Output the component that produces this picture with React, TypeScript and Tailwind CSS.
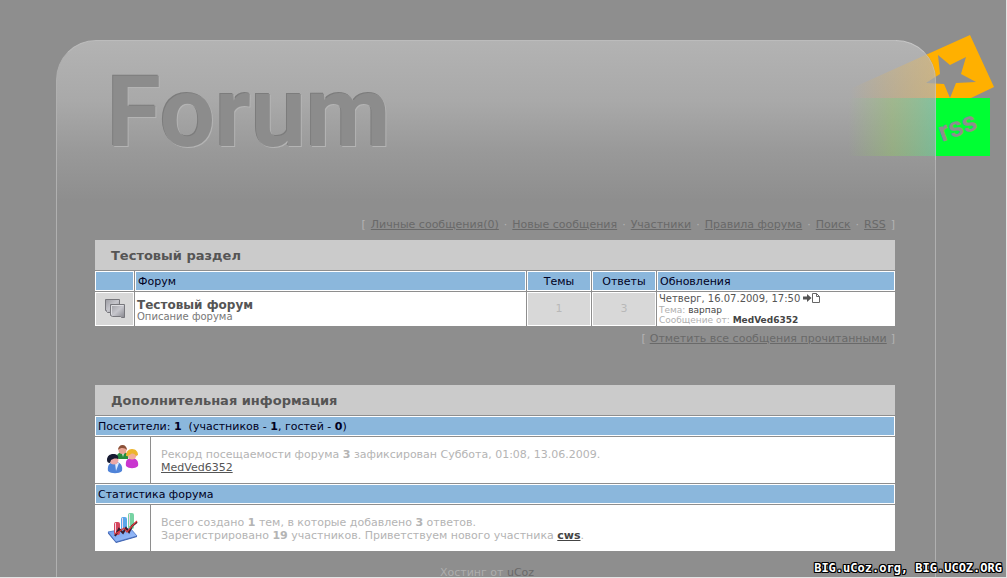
import React from 'react';

interface NavLink {
  label: string;
  href: string;
}

const navLinks: NavLink[] = [
  { label: 'Личные сообщения(0)', href: '#messages' },
  { label: 'Новые сообщения', href: '#new' },
  { label: 'Участники', href: '#members' },
  { label: 'Правила форума', href: '#rules' },
  { label: 'Поиск', href: '#search' },
  { label: 'RSS', href: '#rss' },
];

const headCell =
  'h-[21px] border-t border-[#8e8e8e] bg-[#8bb7dc] px-[3px] pt-0.5 text-[11px] leading-3 font-normal text-[#000022] shadow-[inset_0_0_0_1px_#ffffff]';
const countCell =
  'border-t border-l border-[#8e8e8e] bg-[#d8d8d8] text-center text-[11px] text-[#b8b8b8] shadow-[inset_0_0_0_1px_#ffffff]';

function TopicIcon() {
  return (
    <svg width="20" height="20" viewBox="0 0 20 20" className="mx-auto block" aria-hidden="true">
      <defs>
        <linearGradient id="sheet" x1="0" y1="0" x2="1" y2="1">
          <stop offset="0" stopColor="#9c9ca2" />
          <stop offset="0.5" stopColor="#c6c6cc" />
          <stop offset="1" stopColor="#85858c" />
        </linearGradient>
      </defs>
      <path d="M0.5 0.5h14v13h-12l-1-1v-1h-1z" fill="url(#sheet)" stroke="#77777c" />
      <path d="M5.500 5.500h14v13h-3l-1-1h-8l-2-1z" fill="url(#sheet)" stroke="#77777c" />
      <path d="M6.500 15.500v-9h12" fill="none" stroke="#dedee2" />
    </svg>
  );
}

function LastPostIcon() {
  return (
    <svg width="17" height="10" viewBox="0 0 17 10" className="inline-block align-[-1px]" aria-hidden="true">
      <path d="M0 3.500h4V1l4.500 4L4 9V6.500H0z" fill="#555555" />
      <path d="M9.500 0.500h4l3 3v6h-7zM13.500 0.500v3h3" fill="#ffffff" stroke="#666666" />
    </svg>
  );
}

function PeopleIcon() {
  return (
    <svg width="32" height="30" viewBox="0 0 32 30" className="mx-auto block" aria-hidden="true">
      <path d="M10 14c-1-5 2-7 6-7s6 2 5 7z" fill="#268c3d" />
      <path d="M15 8l1 4 1-4z" fill="#ffffff" />
      <circle cx="15.500" cy="5" r="4" fill="#e9a594" />
      <path d="M11 5c0-3 2-5 4.500-5S20 2 20 5c-2-2-6-3-9 0z" fill="#8b5138" />
      <path d="M19 21c-1-6 2-8 6-8s7 3 6 8c-3 3-9 3-12 0z" fill="#c936cf" />
      <circle cx="25" cy="10" r="4.500" fill="#f3ad98" />
      <path d="M19 11c0-4 2-7 6-7s6 3 6 6l-2 1c-1-2-3-3-5-2l-3 2z" fill="#edb52d" />
      <path d="M1 26c-1-6 2-9 7-9s8 3 7 9c-3 3-11 3-14 0z" fill="#4f83d8" />
      <path d="M8 18l1 8 3-8z" fill="#dce9ff" />
      <circle cx="7" cy="15" r="4.500" fill="#eda8a6" />
      <path d="M0 15c0-4 3-6 6-6 4 0 6 2 5 5-3-1-5 0-7 1l-1 3c-2 0-3-1-3-3z" fill="#171b32" />
    </svg>
  );
}

function ChartIcon() {
  return (
    <svg width="32" height="32" viewBox="0 0 32 32" className="mx-auto block" aria-hidden="true">
      <defs>
        <linearGradient id="floor" x1="0" y1="0" x2="1" y2="1">
          <stop offset="0" stopColor="#6c9bef" />
          <stop offset="1" stopColor="#a3c3fa" />
        </linearGradient>
      </defs>
      <path d="M1 20l22-4 7 8-21 6z" fill="url(#floor)" stroke="#5c84d0" />
      <path d="M1 20v1.500l8 9.500 21-6v-1l-21 6z" fill="#3e62b1" />
      <rect x="7" y="10" width="6" height="13" rx="2" fill="#d6475e" />
      <rect x="14" y="5" width="6" height="14" rx="2" fill="#59a6ea" />
      <rect x="21" y="1" width="6" height="16" rx="2" fill="#77d3a3" />
      <path d="M8.500 11v10M15.500 6v11M22.500 2v12" stroke="#f0d8e8" strokeWidth="1" />
      <path d="M8 24l4-7 4 4 3-5 3 4 3-6 5-4" fill="none" stroke="#3a1c2c" strokeWidth="2" />
      <path d="M8 22l5-3 4-3 3 4 5-6 5-5" fill="none" stroke="#dd3939" strokeWidth="1.200" />
    </svg>
  );
}

// Bookmark and rss tabs that stick out from behind the glass panel
function SideTabs() {
  return (
    <svg width="160" height="130" viewBox="840 30 160 130" className="absolute top-[30px] right-[6px]">
      <defs>
        <clipPath id="inside">
          <path d="M840 40H896A40 40 0 0 1 936 80V160H840Z" />
        </clipPath>
        <clipPath id="outside">
          <path d="M840 30H1000V160H936V80A40 40 0 0 0 896 40H840Z" />
        </clipPath>
        <linearGradient id="fadeOrange" gradientUnits="userSpaceOnUse" x1="850" y1="0" x2="936" y2="0">
          <stop offset="0" stopColor="#e5b145" stopOpacity="0" />
          <stop offset="1" stopColor="#e0b868" stopOpacity="0.55" />
        </linearGradient>
        <linearGradient id="fadeGreen" gradientUnits="userSpaceOnUse" x1="848" y1="0" x2="936" y2="0">
          <stop offset="0" stopColor="#8fd05c" stopOpacity="0" />
          <stop offset="0.5" stopColor="#8fd05c" stopOpacity="0.35" />
          <stop offset="1" stopColor="#5fd894" stopOpacity="0.5" />
        </linearGradient>
      </defs>
      <a href="#bookmark" aria-label="Bookmark">
        <g clipPath="url(#outside)">
          <path d="M970 35L994 87 971 98H850V89Z" fill="#ffb000" />
          <path d="M938 55L950 65 966 57 961 74 976 82 956 83 950 98 944 84 926 83 940 74Z" fill="#8e8e8e" />
        </g>
        <g clipPath="url(#inside)">
          <path d="M970 35L994 87 971 98H850V89Z" fill="url(#fadeOrange)" />
          <path d="M938 55L950 65 944 84 926 83 940 74Z" fill="#a6a6a2" />
        </g>
      </a>
      <a href="#rss">
        <g clipPath="url(#outside)">
          <path d="M848 98H990V156H848Z" fill="#00ff33" />
        </g>
        <g clipPath="url(#inside)">
          <path d="M848 98H990V156H848Z" fill="url(#fadeGreen)" />
        </g>
        <text
          x="942"
          y="142"
          transform="rotate(-20 942 142)"
          className="fill-[#8e8e8e] font-['Roboto',sans-serif] text-[28px] font-bold"
        >
          rss
        </text>
      </a>
      <path d="M896 40.500A39.500 39.500 0 0 1 935.500 80V160" fill="none" stroke="#ffffff" strokeOpacity="0.15" />
    </svg>
  );
}

function SectionTitle({ children, span }: { children: React.ReactNode; span: number }) {
  return (
    <tr>
      <th
        colSpan={span}
        className="h-[30px] bg-[#cbcbcb] px-4 pt-0.5 text-left text-[13px] leading-4 font-bold text-[#555555]"
      >
        {children}
      </th>
    </tr>
  );
}

function ForumTable() {
  return (
    <table className="w-full table-fixed border-separate border-spacing-0 bg-white">
      <colgroup>
        <col className="w-[39px]" />
        <col />
        <col className="w-[65px]" />
        <col className="w-[65px]" />
        <col className="w-[239px]" />
      </colgroup>
      <tbody>
        <SectionTitle span={5}>Тестовый раздел</SectionTitle>
        <tr>
          <td className={headCell}></td>
          <th className={`${headCell} border-l text-left`}>Форум</th>
          <th className={`${headCell} border-l text-center`}>Темы</th>
          <th className={`${headCell} border-l text-center`}>Ответы</th>
          <th className={`${headCell} border-l text-left`}>Обновления</th>
        </tr>
        <tr>
          <td className="h-[35px] border-t border-[#8e8e8e] bg-[#d8d8d8] shadow-[inset_0_0_0_1px_#ffffff]">
            <TopicIcon />
          </td>
          <td className="border-t border-l border-[#8e8e8e] px-0.5 pt-0.5 align-middle">
            <a href="#forum" className="block text-[12px] leading-[14px] font-bold text-[#555555]">
              Тестовый форум
            </a>
            <div className="text-[10px] leading-[10px] text-[#777777]">Описание форума</div>
          </td>
          <td className={countCell}>1</td>
          <td className={countCell}>3</td>
          <td className="border-t border-l border-[#8e8e8e] px-0.5 text-[9px] leading-[10px] whitespace-nowrap text-[#b0b0b0]">
            <a href="#last" className="block text-[10px] leading-3 text-[#555555]">
              Четверг, 16.07.2009, 17:50 <LastPostIcon />
            </a>
            <div>
              Тема: <a href="#topic" className="text-[#444444]">варпар</a>
            </div>
            <div>
              Сообщение от: <a href="#user" className="font-bold text-[#444444]">MedVed6352</a>
            </div>
          </td>
        </tr>
      </tbody>
    </table>
  );
}

function InfoTable() {
  const iconCell = 'h-[47px] border-t border-[#8e8e8e]';
  const textCell = 'border-t border-l border-[#8e8e8e] px-2.5 pt-0.5 text-[11px] leading-[13px] text-[#b4b4b4]';

  return (
    <table className="w-full table-fixed border-separate border-spacing-0 bg-white">
      <colgroup>
        <col className="w-[55px]" />
        <col />
      </colgroup>
      <tbody>
        <SectionTitle span={2}>Дополнительная информация</SectionTitle>
        <tr>
          <th colSpan={2} className={`${headCell} text-left`}>
            Посетители: <b>1</b> &nbsp;(участников - <b>1</b>, гостей - <b>0</b>)
          </th>
        </tr>
        <tr>
          <td className={iconCell}>
            <PeopleIcon />
          </td>
          <td className={textCell}>
            Рекорд посещаемости форума <b>3</b> зафиксирован Суббота, 01:08, 13.06.2009.
            <br />
            <a href="#user" className="text-[#555555] underline">MedVed6352</a>
          </td>
        </tr>
        <tr>
          <th colSpan={2} className={`${headCell} text-left`}>Статистика форума</th>
        </tr>
        <tr>
          <td className={iconCell}>
            <ChartIcon />
          </td>
          <td className={textCell}>
            Всего создано <b>1</b> тем, в которые добавлено <b>3</b> ответов.
            <br />
            Зарегистрировано <b>19</b> участников. Приветствуем нового участника{' '}
            <a href="#cws" className="font-bold text-[#444444] underline">cws</a>.
          </td>
        </tr>
      </tbody>
    </table>
  );
}

export default function App() {
  return (
    <div className="relative flex min-h-screen flex-col border-r border-b border-[#e4e4e4] bg-[#8e8e8e] pt-10 pr-[70px] pl-14 font-['DejaVu_Sans',Verdana,sans-serif]">
      <div className="flex grow flex-col rounded-t-[40px] border-x border-t border-[#b0b0b0] border-t-[#bcbcbc] bg-[linear-gradient(to_bottom,#b3b3b3_0px,#a9a9a9_60px,#999999_110px,#8e8e8e_160px)] pr-10 pl-[38px]">
        <header className="flex h-[177px] items-start pt-4 pl-3">
          <h1 className="font-['Roboto',sans-serif] text-[98px] leading-[112px] font-bold text-[#8c8c8c] [text-shadow:1px_1px_0_#b4b4b4,-1px_-1px_0_#7c7c7c]">
            Forum
          </h1>
        </header>

        <nav className="flex justify-end gap-[5px] pb-2 text-[11px] leading-[14px] text-[#b4b4b4]">
          <span>[</span>
          {navLinks.map((link, i) => (
            <React.Fragment key={link.href}>
              {i > 0 && <span>·</span>}
              <a href={link.href} className="text-[#696969] underline">{link.label}</a>
            </React.Fragment>
          ))}
          <span>]</span>
        </nav>

        <main>
          <ForumTable />
          <div className="flex justify-end gap-1 pt-1.5 pb-[39px] text-[11px] leading-[14px] text-[#b4b4b4]">
            <span>[</span>
            <a href="#read" className="text-[#696969] underline">Отметить все сообщения прочитанными</a>
            <span>]</span>
          </div>
          <InfoTable />
        </main>

        <footer className="-mb-1 pt-[15px] pr-4 text-center text-[11px] leading-[13px] text-[#adadad]">
          Хостинг от <a href="#ucoz" className="text-[#696969]">uCoz</a>
        </footer>
      </div>

      <SideTabs />

      <div className="absolute right-1 bottom-0.5 font-['DejaVu_Sans_Mono',monospace] text-[12px] leading-[14px] font-bold text-white [text-shadow:1px_0_#000,-1px_0_#000,0_1px_#000,0_-1px_#000,1px_1px_#000,-1px_-1px_#000,1px_-1px_#000,-1px_1px_#000]">
        BIG.uCoz.org, BIG.UCOZ.ORG
      </div>
    </div>
  );
}
